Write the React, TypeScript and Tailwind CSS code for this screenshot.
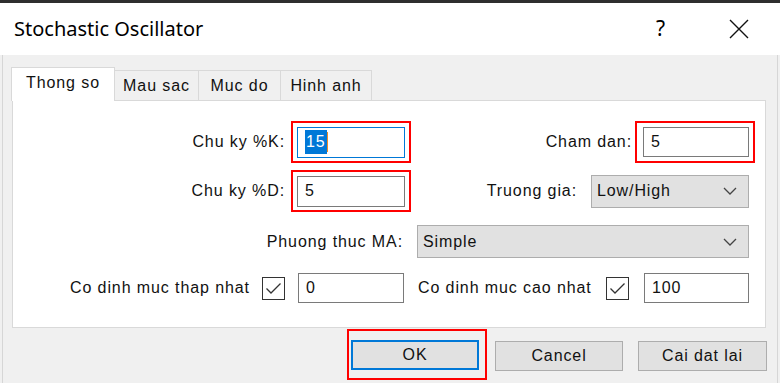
import React from "react";

const ui = "font-['Liberation_Sans',Arial,sans-serif] text-[16px] tracking-[0.9px] text-[#111]";

function Chevron() {
  return (
    <svg width="14" height="8" viewBox="0 0 14 8" fill="none">
      <path d="M1 1l6 6 6-6" stroke="#444" strokeWidth="1.3" />
    </svg>
  );
}

function Check() {
  return (
    <div className="w-[23px] h-[23px] border-[1.5px] border-[#333] bg-white flex items-center justify-center">
      <svg width="17" height="13" viewBox="0 0 17 13" fill="none">
        <path d="M1.5 6.5l4.5 4.5L15.5 1.5" stroke="#333" strokeWidth="1.3" />
      </svg>
    </div>
  );
}

function Input({ value, className }: { value: string; className: string }) {
  return (
    <div className={`border border-[#7a7a7a] bg-white flex items-center pl-[7px] ${className}`}>
      <span className={ui}>{value}</span>
    </div>
  );
}

function Select({ value, className }: { value: string; className: string }) {
  return (
    <div className={`h-[33px] border border-[#adadad] bg-[#e1e1e1] flex items-center justify-between pl-[5px] pr-[11px] ${className}`}>
      <span className={ui}>{value}</span>
      <Chevron />
    </div>
  );
}

function Button({ label, className }: { label: string; className: string }) {
  return (
    <div className={`h-[30px] bg-[#e1e1e1] flex items-center justify-center ${className}`}>
      <span className={ui}>{label}</span>
    </div>
  );
}

export default function App() {
  return (
    <div className="w-[780px] h-[383px] bg-[#f0f0f0] overflow-hidden flex flex-col">
      <div className="h-[3px] bg-[#2e2e2e]" />

      {/* title bar */}
      <div className="h-[52px] bg-white flex items-center pl-[14px]">
        <span className="font-['Noto_Sans',sans-serif] text-[20px] text-black">Stochastic Oscillator</span>
        <span className="ml-auto font-['Noto_Sans',sans-serif] text-[21px] text-black">?</span>
        <svg className="ml-[64px] mr-[31px]" width="20" height="20" viewBox="0 0 20 20" fill="none">
          <path d="M1 1l18 18M19 1L1 19" stroke="#111" strokeWidth="1.4" />
        </svg>
      </div>

      {/* body */}
      <div className="flex-1 mx-[2px] border-x border-[#d6d6d6] pt-[12px]">
        <div className="flex items-end h-[33px] ml-[8px]">
          <div className="relative z-10 h-[34px] -mb-px w-[104px] bg-white border border-b-0 border-[#d9d9d9] flex items-center justify-center pb-[4px]">
            <span className={ui}>Thong so</span>
          </div>
          <div className="h-[30px] w-[84px] border border-l-0 border-b-0 border-[#d9d9d9] flex items-center justify-center">
            <span className={ui}>Mau sac</span>
          </div>
          <div className="h-[30px] w-[82px] border border-l-0 border-b-0 border-[#d9d9d9] flex items-center justify-center">
            <span className={ui}>Muc do</span>
          </div>
          <div className="h-[30px] w-[91px] border border-l-0 border-b-0 border-[#d9d9d9] flex items-center justify-center">
            <span className={ui}>Hinh anh</span>
          </div>
        </div>

        {/* panel */}
        <div className="ml-[9px] w-[754px] h-[228px] bg-white border border-[#d9d9d9] pt-[20px] flex flex-col">
          <div className="flex items-center h-[42px]">
            <div className={`w-[272px] text-right ${ui}`}>Chu ky %K:</div>
            <div className="ml-[6px] w-[120px] h-[42px] border-2 border-[#f00] flex items-center justify-center">
              <div className="w-[108px] h-[31px] border border-[#0078d7] bg-white flex items-center pl-[7px]">
                <span className={`bg-[#0078d7] px-[1px] ${ui} text-white`}>15</span>
                <span className="w-[1px] h-[20px] bg-[#f08a24]" />
              </div>
            </div>
            <div className={`w-[221px] text-right ${ui}`}>Cham dan:</div>
            <div className="ml-[3px] w-[120px] h-[42px] border-2 border-[#f00] flex items-center pl-[6px]">
              <Input value="5" className="w-[106px] h-[30px]" />
            </div>
          </div>

          <div className="flex items-center h-[42px] mt-[7px]">
            <div className={`w-[272px] text-right ${ui}`}>Chu ky %D:</div>
            <div className="ml-[6px] w-[120px] h-[42px] border-2 border-[#f00] flex items-center justify-center">
              <Input value="5" className="w-[108px] h-[31px]" />
            </div>
            <div className={`w-[166px] text-right ${ui}`}>Truong gia:</div>
            <Select value="Low/High" className="ml-[14px] w-[158px]" />
          </div>

          <div className="flex items-center h-[33px] mt-[13px]">
            <div className={`w-[390px] text-right ${ui}`}>Phuong thuc MA:</div>
            <Select value="Simple" className="ml-[14px] w-[332px]" />
          </div>

          <div className="flex items-center h-[30px] mt-[15px] pl-[57px]">
            <div className={`w-[188px] ${ui}`}>Co dinh muc thap nhat</div>
            <div className="ml-[4px]">
              <Check />
            </div>
            <Input value="0" className="ml-[13px] w-[106px] h-[30px]" />
            <div className={`ml-[14px] w-[184px] ${ui}`}>Co dinh muc cao nhat</div>
            <div className="ml-[4px]">
              <Check />
            </div>
            <Input value="100" className="ml-[15px] w-[105px] h-[30px]" />
          </div>
        </div>

        {/* buttons */}
        <div className="flex items-start mt-[1px] ml-[344px]">
          <div className="w-[140px] h-[51px] border-2 border-[#f00] pl-[2px] pt-[9px]">
            <Button label="OK" className="w-[128px] border-2 border-[#0078d7]" />
          </div>
          <Button label="Cancel" className="ml-[8px] mt-[12px] w-[128px] border border-[#adadad]" />
          <Button label="Cai dat lai" className="ml-[15px] mt-[12px] w-[129px] border border-[#adadad]" />
        </div>
      </div>
    </div>
  );
}
